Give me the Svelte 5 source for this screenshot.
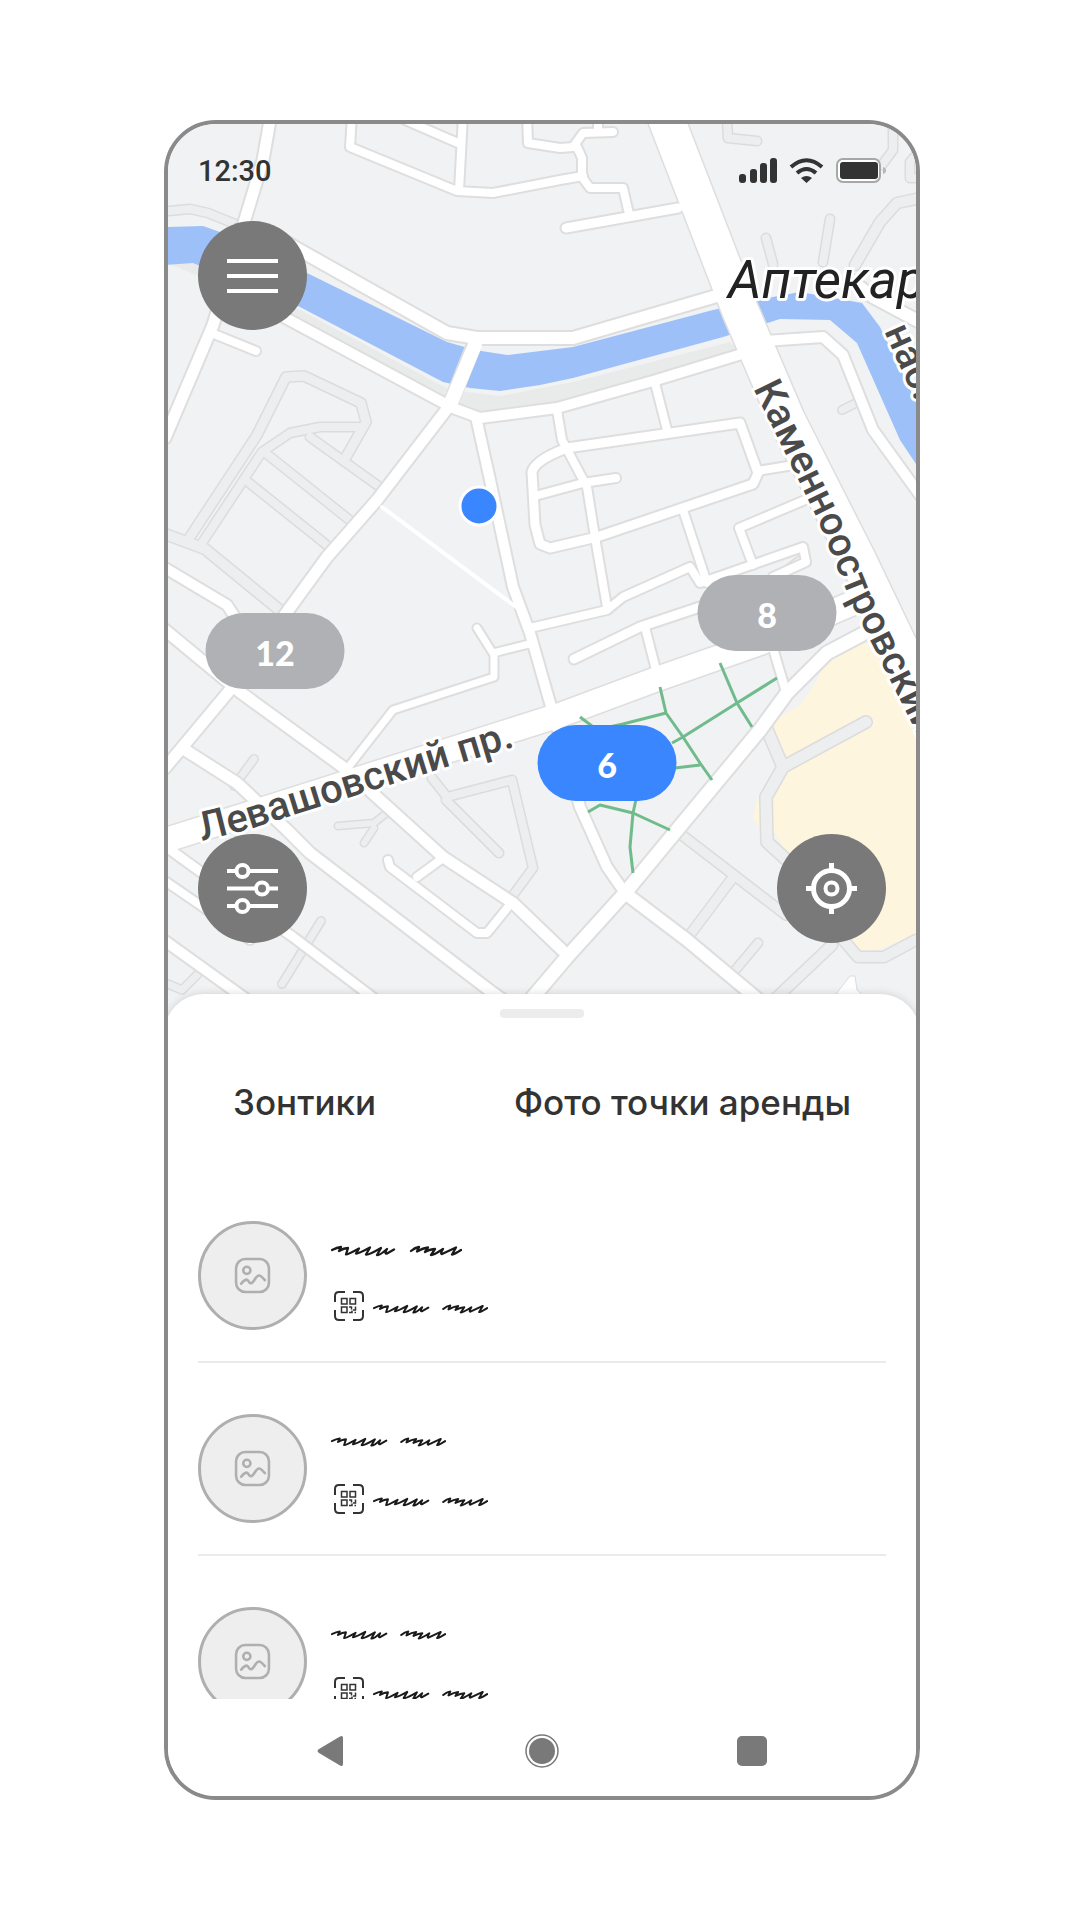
<script>
	// map is drawn in its own units, pins use the same ones
	const map = { x: 168, y: 124, w: 748, h: 900 };

	const pins = [
		{ count: 12, x: 275, y: 651 },
		{ count: 8, x: 767, y: 613 },
		{ count: 6, x: 607, y: 763 }
	];

	const left = (x) => ((x - map.x) / map.w) * 100;
	const top = (y) => ((y - map.y) / map.h) * 100;

	// small passages: same colour as the ground, only an outline
	const passages = [
		{ w: 9, d: 'M168 211 L190 209 L208 213 L240 226' },
		{ w: 9, d: 'M727 120 L728 138 L757 141' },
		{ w: 9, d: 'M773 264 L766 238 M823 262 L830 219' },
		{ w: 11, d: 'M855 265 L880 222 L897 203 L916 199' },
		{ w: 9, d: 'M893 120 L893 150 L882 165 M916 155 L910 162 L910 178 L916 178' },
		{ w: 8, d: 'M862 400 L842 410' },
		{ w: 10, d: 'M188 540 L257 435 L286 377 L304 376 L361 403 L366 422 L346 457' },
		{ w: 9, d: 'M200 546 L262 452 L290 433 L320 427 L358 427' },
		{ w: 9, d: 'M310 437 L384 490 M268 455 L352 522 M248 482 L333 550' },
		{ w: 11, d: 'M165 534 L205 549 L282 612' },
		{ w: 7, d: 'M338 826 L374 823 L388 812 M364 843 L374 828' },
		{ w: 8, d: 'M234 786 L254 759' },
		{ w: 9, d: 'M432 778 L447 797 L512 780 L533 868 L508 902' },
		{ w: 9, d: 'M446 800 L499 853' },
		{ w: 8, d: 'M321 921 L282 984' },
		{ w: 8, d: 'M197 975 L182 990 L168 984' },
		{ w: 10, d: 'M678 832 L786 915 M731 880 L686 940' },
		{ w: 9, d: 'M758 943 L732 974' },
		{ w: 11, d: 'M832 945 L774 1000' },
		{ w: 11, d: 'M800 890 L858 957 L884 957 L916 940' },
		{ w: 12, d: 'M765 725 L783 767 L766 797 L767 842 L800 872 M783 767 L866 722' },
		{ w: 8, d: 'M773 580 L800 560' }
	];

	const roads = [
		{ w: 11, d: 'M271 115 L263 160 L213 325 L165 438' },
		{ w: 8, d: 'M214 334 L256 351' },
		{ w: 8, d: 'M352 115 L350 147 L457 191 L493 193 L560 180 L583 176' },
		{ w: 8, d: 'M405 120 L458 143 M463 115 L459 191' },
		{ w: 8, d: 'M527 115 L528 143 L560 148 L573 147 L583 133 L613 132 M598 115 L598 132' },
		{ w: 8, d: 'M577 147 L582 158 L582 177 L590 188 L623 188 L629 214' },
		{ w: 9, d: 'M566 228 L678 208' },
		{ w: 12, d: 'M285 242 L447 333 L477 338 L573 338 L720 295' },
		{ w: 12, d: 'M850 280 L873 297 L920 322' },
		{ w: 10, d: 'M280 315 L453 408 L480 418 L557 408 L653 381 L745 353' },
		{ w: 10, d: 'M765 341 L823 337 L843 355 L873 430 L920 495' },
		{ w: 11, d: 'M450 405 L377 500 L327 557 L230 690 L165 768' },
		{ w: 10, d: 'M476 417 L490 480 L513 587 L530 633 L552 710 L580 807 L607 867 L625 893' },
		{ w: 8, d: 'M557 410 L562 440 L587 487 L595 537 L607 607' },
		{ w: 8, d: 'M655 383 L667 430' },
		{ w: 9, d: 'M567 448 L740 423 L758 473 L753 484 L597 537 L550 548 L540 544 L535 525 L532 472 Q535 460 567 448' },
		{ w: 8, d: 'M535 496 L583 483 L616 478 M757 471 L800 464' },
		{ w: 8, d: 'M683 510 L707 583' },
		{ w: 8, d: 'M530 628 L607 610 L623 597 L690 567 L700 583 L803 547 L806 562 L773 577' },
		{ w: 8, d: 'M753 565 L739 528 L805 500' },
		{ w: 9, d: 'M574 659 L640 627 L715 602' },
		{ w: 8, d: 'M645 627 L656 670' },
		{ w: 8, d: 'M773 648 L786 692' },
		{ w: 7, d: 'M477 628 L494 655 L494 677 L393 710 L350 765 M493 653 L533 643' },
		{ w: 11, d: 'M165 630 L240 692 L347 770 L443 857 L513 903 L562 950' },
		{ w: 10, d: 'M165 568 L227 605 L250 640' },
		{ w: 11, d: 'M182 748 L237 783 L287 830 L310 853 L493 993 L510 1005' },
		{ w: 9, d: 'M165 846 L205 875 L293 937 L380 1003' },
		{ w: 8, d: 'M165 881 L200 905 L250 940' },
		{ w: 10, d: 'M165 941 L250 1002' },
		{ w: 8, d: 'M388 860 L390 867 L477 933 L487 933 L508 907 M417 877 L443 858' },
		{ w: 12, d: 'M625 893 L687 940 L760 1001' },
		{ w: 13, d: 'M880 625 L827 653 L787 693 L760 730 L677 830 L625 893 L567 957 L528 1003' }
	];

	const paths = [
		'M720 663 L737 703 L752 727',
		'M777 678 L737 703 L683 737 L672 743',
		'M660 687 L666 713 L683 737 L700 763 L712 780',
		'M666 713 L623 724 L600 729',
		'M580 717 L592 726',
		'M588 812 L600 805 L633 813 L670 830',
		'M637 795 L633 813 L630 847 L633 873',
		'M675 768 L700 765'
	];

	const umbrellas = [
		{ id: 1, wide: true },
		{ id: 2, wide: false },
		{ id: 3, wide: false }
	];

	let selected = 6;
</script>

<main>
	<div class="phone">
		<section class="map">
			<svg class="ground" viewBox="{map.x} {map.y} {map.w} {map.h}">
				<rect x="160" y="110" width="770" height="930" fill="#f0f2f3" />
				<path fill="#e9ebeb" d="M165 262 L200 263 L300 310 L450 390 L500 396 L573 382 L730 342 L740 350 L653 376 L557 403 L480 412 L453 402 L283 312 Z" />

				<!-- beige block -->
				<path fill="#fef5df" d="M827 650 L873 642 L916 727 V935 L877 950 L860 952 L790 860 L773 830 L773 797 L788 773 L773 730 L777 718 L800 705 L817 680 Z" />
				<path fill="#fef5df" d="M758 792 L753 818 L760 830 Z" />

				<g fill="none" stroke-linejoin="round" stroke-linecap="round">
					{#each passages as p}
						<path d={p.d} stroke="#dcdcdc" stroke-width={p.w + 2} />
					{/each}
					{#each passages as p}
						<path d={p.d} stroke="#eceeef" stroke-width={p.w - 1} />
					{/each}
				</g>

				<!-- river -->
				<path fill="#9dc0f9" d="M165 227 L203 226 L220 232 L307 273 L447 342 L475 350 L507 355 L573 347 L713 310 L757 300 L800 292 L862 303 L880 327 L920 410 V470 L900 440 L857 343 L830 320 L780 319 L723 337 L573 378 L540 385 L500 391 L470 388 L443 382 L300 307 L193 263 L165 265 Z" />

				<g fill="none" stroke-linejoin="round" stroke-linecap="round">
					<g stroke="#dedede">
						{#each roads as r}
							<path d={r.d} stroke-width={r.w + 4} />
						{/each}
						<path d="M473 347 L450 405" stroke-width="16" />
						<path d="M160 842 L560 715 L657 679 L760 643 L860 600" stroke-width="27" />
						<path d="M657 95 L740 310 L787 420 L858 560 L925 700" stroke-width="39" />
					</g>
					<g stroke="#fff">
						{#each roads as r}
							<path d={r.d} stroke-width={r.w} />
						{/each}
						<path d="M475 345 L450 405" stroke-width="14" />
						<path d="M382 507 L520 610" stroke-width="4" />
						<path d="M160 842 L560 715 L657 679 L760 643 L860 600" stroke-width="24" />
						<path d="M657 95 L740 310 L787 420 L858 560 L925 700" stroke-width="36" />
					</g>
					<g stroke="#6fbb8b" stroke-width="3" stroke-linecap="butt">
						{#each paths as d}
							<path {d} />
						{/each}
					</g>
				</g>
				<path fill="#fff" stroke="#dcdcdc" d="M836 994 L850 976 L855 976 L857 990 L866 998 Z" />

				<defs>
					<path id="kam" d="M753 388 L818 520 L850 600 L930 760" />
					<path id="lev" d="M202 841 L250 829 L303 812 L380 788 L447 767 L540 739" />
					<path id="nab" d="M884 331 L960 500" />
				</defs>
				<g class="labels">
					<text class="district" x="728" y="298">Аптекарский</text>
					<text class="street"><textPath href="#kam">Каменноостровский</textPath></text>
					<text class="street"><textPath href="#lev">Левашовский пр.</textPath></text>
					<text class="street"><textPath href="#nab">наб.</textPath></text>
				</g>

				<circle cx="479" cy="506" r="19" fill="#3a86ff" stroke="#fff" stroke-width="3" />
			</svg>

			{#each pins as pin}
				<button
					class="pin"
					class:active={selected === pin.count}
					style="left: {left(pin.x)}%; top: {top(pin.y)}%"
					on:click={() => (selected = pin.count)}>{pin.count}</button
				>
			{/each}

			<div class="overlay">
				<header>
					<time>12:30</time>
					<svg width="148" height="26" viewBox="0 0 148 26" fill="#333">
						<rect x="1" y="16" width="7" height="9" rx="3" />
						<rect x="12" y="11" width="7" height="14" rx="3" />
						<rect x="22" y="5" width="7" height="20" rx="3" />
						<rect x="32" y="0" width="7" height="25" rx="3" />
						<g fill="none" stroke="#333" stroke-width="4">
							<path d="M53 9 Q68.500 -4.500 84 9" />
							<path d="M59 15 Q68.500 7 78 15" />
						</g>
						<path d="M63 20 Q68.500 16 74 20 L68.500 25 Z" />
						<rect x="99" y="1" width="43" height="23" rx="6" fill="#fff" stroke="#a5a8a5" stroke-width="2" />
						<rect x="102" y="4" width="38" height="17" rx="3" />
						<path d="M145 9 Q148 10 148 12.500 Q148 15 145 16 Z" fill="#b5b8b5" />
					</svg>
				</header>

				<button class="round" aria-label="Меню">
					<svg width="51" height="51" viewBox="0 0 51 51" stroke="#fff" stroke-width="4">
						<path d="M0 11 H51 M0 26 H51 M0 41 H51" />
					</svg>
				</button>

				<div class="tools">
					<button class="round" aria-label="Фильтры">
						<svg width="51" height="51" viewBox="0 0 51 51" fill="#797979" stroke="#fff" stroke-width="4">
							<path d="M0 8 H51 M0 25.500 H51 M0 43 H51" />
							<circle cx="15.500" cy="8" r="6" />
							<circle cx="35" cy="25.500" r="6" />
							<circle cx="15.500" cy="43" r="6" />
						</svg>
					</button>
					<button class="round" aria-label="Моё местоположение">
						<svg width="51" height="51" viewBox="0 0 51 51" fill="none" stroke="#fff" stroke-width="5">
							<circle cx="25.500" cy="25.500" r="18" />
							<circle cx="25.500" cy="25.500" r="6" stroke-width="4" />
							<path d="M25.500 0 V8 M25.500 43 V51 M0 25.500 H8 M43 25.500 H51" />
						</svg>
					</button>
				</div>
			</div>
		</section>

		<section class="sheet">
			<div class="handle"></div>
			<div class="tabs">
				<button>Зонтики</button>
				<button>Фото точки аренды</button>
			</div>

			<ul>
				{#each umbrellas as item (item.id)}
					<li>
						<div class="photo">
							<svg width="37" height="37" viewBox="0 0 36 36" fill="none" stroke="#afafaf" stroke-width="2.500" stroke-linecap="round">
								<rect x="2" y="2" width="32" height="32" rx="9" />
								<circle cx="12.500" cy="13" r="3.500" />
								<path d="M7 26 Q10 22 12.500 22 C15 23 14 26 17 25.500 C20 24 21 18 24.500 18 Q26 18 30 22.500" />
							</svg>
						</div>
						<div class="info">
							<svg class="scribble" class:wide={item.wide} viewBox="0 0 131 12">
								<use href="#scribble" />
							</svg>
							<div class="code">
								<svg width="32" height="32" viewBox="0 0 32 32" fill="none" stroke="#333" stroke-width="2">
									<path d="M2 12 V6 Q2 2 6 2 H12 M20 2 H26 Q30 2 30 6 V12 M30 20 V26 Q30 30 26 30 H20 M12 30 H6 Q2 30 2 26 V20" />
									<path stroke-width="1.500" d="M8.500 8.500 H14 V14 H8.500 Z M17 8.500 H22.500 V14 H17 Z M8.500 17 H14 V22.500 H8.500 Z" />
									<path stroke-width="1.500" d="M16 17 H18.500 V19.500 M22.500 16.500 V20 H20 M16 22.500 H19 V20.500 M21.500 22.500 H23" />
								</svg>
								<svg class="scribble" viewBox="0 0 131 12">
									<use href="#scribble" />
								</svg>
							</div>
						</div>
					</li>
				{/each}
			</ul>
		</section>

		<nav>
			<button aria-label="Назад">
				<svg width="34" height="34" viewBox="0 0 34 34" fill="#797979">
					<path d="M25 2.500 Q28 1 28 4 V30 Q28 33 25 31.500 L4 19 Q1 17 4 15 Z" />
				</svg>
			</button>
			<button aria-label="Домой">
				<svg width="34" height="34" viewBox="0 0 34 34" fill="#797979">
					<circle cx="17" cy="17" r="16" fill="none" stroke="#797979" stroke-width="1.500" />
					<circle cx="17" cy="17" r="13" />
				</svg>
			</button>
			<button aria-label="Приложения">
				<svg width="34" height="34" viewBox="0 0 34 34" fill="#797979">
					<rect x="2" y="2" width="30" height="30" rx="5" />
				</svg>
			</button>
		</nav>
	</div>

	<svg class="sprite" width="0" height="0">
		<symbol id="scribble" viewBox="0 0 131 12">
			<path
				fill="none"
				stroke="#1a1a1a"
				stroke-width="2.300"
				stroke-linecap="round"
				stroke-linejoin="round"
				d="M1 5 Q6 2.500 10 2 L8 6 Q13 3 17 3 L15 9.500 Q16 10 28 3.500 L25 8.500 Q27 9 39 2.500 L35 9.500 Q37 10.500 50 3 L46 10 Q48 11 56 4 Q53 9 56 8.500 L63 4.500
				M80 6 Q84 2.500 88 2 L86 6.500 Q92 3 97 2.500 L94 7 Q100 4 104 4 L100 10 Q102 10.500 112 4 Q109 9 111 9 L125 2.500 L121 9.500 Q124 9 130 5"
			/>
		</symbol>
	</svg>
</main>

<style>
	:global(body) {
		background: #fff;
	}

	main {
		padding: 120px 160px 120px 164px;
		font-family: Inter, 'Noto Sans', sans-serif;
		color: #333;
	}

	button {
		padding: 0;
		border: 0;
		background: none;
		color: inherit;
		font: inherit;
		cursor: pointer;
	}

	svg {
		display: block;
	}

	.sprite {
		position: absolute;
	}

	.phone {
		border: 4px solid #8a8a8a;
		border-radius: 52px;
		background: #fff;
		overflow: hidden;
	}

	.map {
		position: relative;
	}

	.ground {
		width: 100%;
		height: auto;
	}

	.labels {
		font-family: Roboto, 'Noto Sans', sans-serif;
		fill: #4a4a4a;
		stroke: #fff;
		stroke-width: 6px;
		stroke-linejoin: round;
		paint-order: stroke;
	}

	.district {
		font-size: 53px;
		font-style: italic;
		fill: #222;
	}

	.street {
		font-size: 40px;
		font-weight: 500;
	}

	.overlay {
		position: absolute;
		inset: 0;
		display: flex;
		flex-direction: column;
		align-items: flex-start;
		padding: 30px 30px 81px;
		pointer-events: none;
	}

	.overlay button {
		pointer-events: auto;
	}

	header {
		display: flex;
		justify-content: space-between;
		align-items: center;
		align-self: stretch;
		height: 34px;
		margin-bottom: 33px;
	}

	time {
		font-family: Roboto, sans-serif;
		font-size: 29px;
		font-weight: 500;
		line-height: 34px;
	}

	.round {
		display: grid;
		place-items: center;
		width: 109px;
		height: 109px;
		border-radius: 50%;
		background: #797979;
	}

	.tools {
		display: flex;
		justify-content: space-between;
		align-self: stretch;
		margin-top: auto;
	}

	.pin {
		position: absolute;
		width: 139px;
		height: 76px;
		border-radius: 38px;
		background: #afb1b5;
		color: #fff;
		font-family: Lato, sans-serif;
		font-size: 34px;
		font-weight: 900;
		line-height: 40px;
		padding-top: 4px;
		transform: translate(-50%, -50%);
	}

	.pin.active {
		background: #3a86ff;
	}

	.sheet {
		position: relative;
		margin: -30px -4px 0;
		padding: 15px 34px 0;
		border-radius: 40px 40px 0 0;
		background: #fff;
		box-shadow: 0 0 8px rgba(0, 0, 0, 0.15);
	}

	.handle {
		width: 84px;
		height: 9px;
		margin: 0 auto;
		border-radius: 4px;
		background: #ececec;
	}

	.tabs {
		display: flex;
		justify-content: space-between;
		padding: 64px 35px 48px;
	}

	.tabs button {
		font-size: 35px;
		font-weight: 500;
		line-height: 40px;
	}

	ul {
		height: 529px;
		margin: 0;
		padding: 0;
		list-style: none;
		overflow: hidden;
	}

	li {
		display: flex;
		gap: 24px;
		padding: 51px 0 31px;
		border-bottom: 2px solid #ebebeb;
	}

	.photo {
		display: grid;
		place-items: center;
		box-sizing: border-box;
		width: 109px;
		height: 109px;
		border: 3px solid #afafaf;
		border-radius: 50%;
		background: #eee;
	}

	.info {
		display: flex;
		flex-direction: column;
		justify-content: space-between;
		padding: 22px 0 8px;
	}

	.scribble {
		width: 115px;
		height: 12px;
	}

	.scribble.wide {
		width: 131px;
		height: 16px;
	}

	.code {
		display: flex;
		align-items: center;
		gap: 8px;
		padding-left: 2px;
	}

	.code .scribble {
		margin-top: 6px;
	}

	nav {
		position: relative;
		display: flex;
		justify-content: center;
		gap: 176px;
		padding: 35px 0 28px;
		background: #fff;
	}
</style>
